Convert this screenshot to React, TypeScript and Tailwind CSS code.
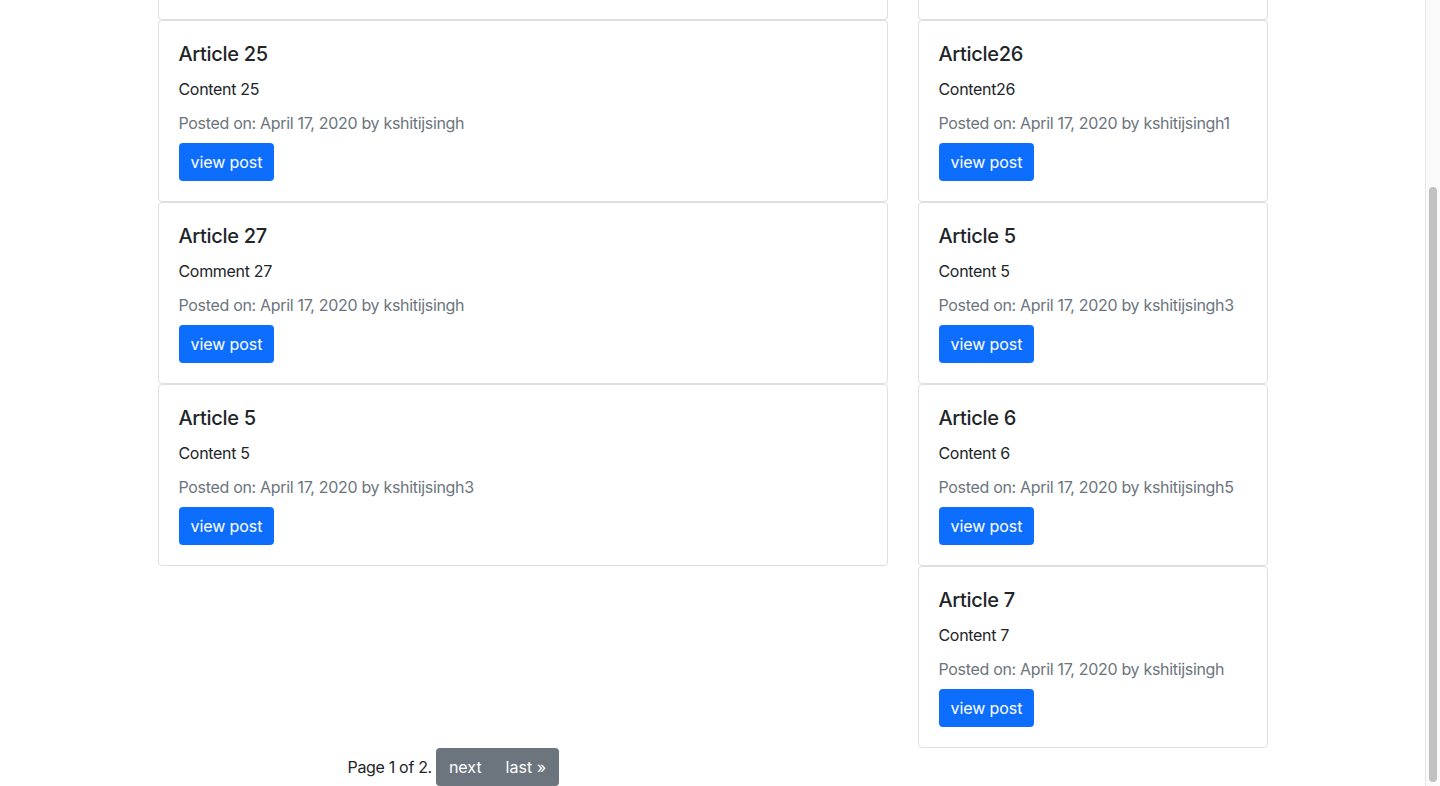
import React from "react";

interface Post {
  title: string;
  content: string;
  author: string;
}

const leftPosts: Post[] = [
  { title: "Article 25", content: "Content 25", author: "kshitijsingh" },
  { title: "Article 27", content: "Comment 27", author: "kshitijsingh" },
  { title: "Article 5", content: "Content 5", author: "kshitijsingh3" },
];

const rightPosts: Post[] = [
  { title: "Article26", content: "Content26", author: "kshitijsingh1" },
  { title: "Article 5", content: "Content 5", author: "kshitijsingh3" },
  { title: "Article 6", content: "Content 6", author: "kshitijsingh5" },
  { title: "Article 7", content: "Content 7", author: "kshitijsingh" },
];

// the card above the fold, only its bottom edge shows
const CutCard = () => (
  <div className="h-[20px] bg-white border-x border-b border-[#dfdfdf] rounded-b-[4px]" />
);

const PostCard = ({ post }: { post: Post }) => (
  <div className="bg-white border border-[#dfdfdf] rounded-[4px] p-5">
    <h5 className="text-[20px] leading-[24px] font-medium text-[#212529] mb-[11px] pt-px">
      {post.title}
    </h5>
    <p className="text-base leading-6 text-[#212529] mb-[10px]">{post.content}</p>
    <p className="text-base leading-6 text-[#6c757d] mb-2 whitespace-nowrap">
      Posted on: April 17, 2020 by {post.author}
    </p>
    <button className="h-[38px] px-3 bg-[#0d6efd] text-white text-base leading-6 rounded-[4px] tracking-[-0.005em]">
      view post
    </button>
  </div>
);

export default function App() {
  return (
    <div
      className="h-[786px] overflow-hidden flex bg-white tracking-[-0.02em]"
      style={{ fontFamily: "Inter, 'Liberation Sans', sans-serif" }}
    >
      <div className="flex-1 min-w-0">
        <div className="w-[1110px] mx-auto">
          <div className="flex gap-[30px] items-start">
            <div className="w-[730px] flex flex-col">
              <CutCard />
              {leftPosts.map((post, index) => (
                <PostCard key={`left-${index}`} post={post} />
              ))}
            </div>
            <div className="w-[350px] flex flex-col">
              <CutCard />
              {rightPosts.map((post, index) => (
                <PostCard key={`right-${index}`} post={post} />
              ))}
            </div>
          </div>
          <div className="flex items-center pl-[190px]">
            <span className="text-base leading-6 text-[#212529] mr-1">Page 1 of 2.</span>
            <div className="flex rounded-[4px] overflow-hidden bg-[#6c757d] tracking-normal">
              <button className="h-[38px] pl-[13px] pr-3 text-white text-base leading-6">next</button>
              <button className="h-[38px] pl-3 pr-[13px] text-white text-base leading-6">last »</button>
            </div>
          </div>
        </div>
      </div>
      <div className="w-[15px] border-l border-[#e6e6e6] bg-[#fafafa] flex flex-col pt-[187px] pb-[4px] items-center">
        <div className="flex-1 w-[8px] rounded-full bg-[#c1c1c1]" />
      </div>
    </div>
  );
}
